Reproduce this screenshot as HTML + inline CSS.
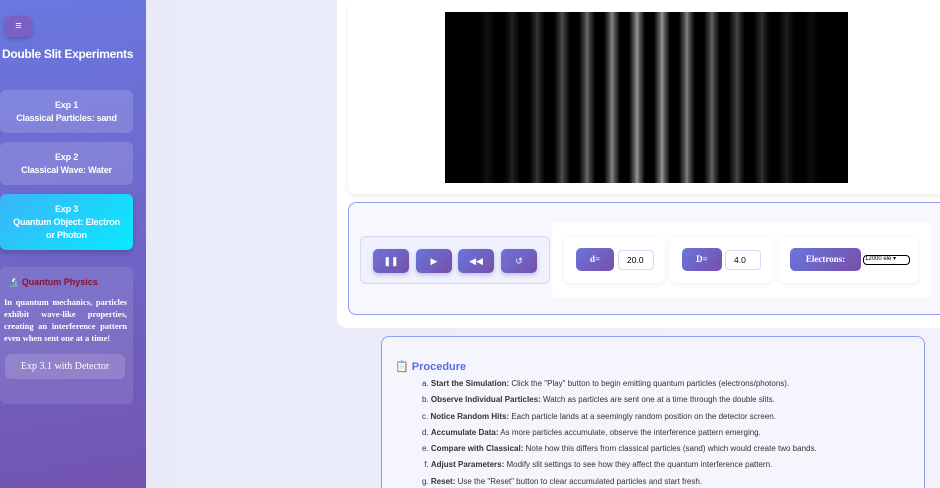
<!DOCTYPE html>
<html><head><meta charset="utf-8"><style>
*{box-sizing:border-box;margin:0;padding:0}
html,body{width:940px;height:488px;overflow:hidden}
body{background:linear-gradient(90deg,#e6e9f8,#f1f2fb);font-family:"Liberation Sans",sans-serif;position:relative}
.side{position:absolute;left:0;top:0;width:146px;height:488px;background:linear-gradient(170deg,#6a78e0,#7354b0 100%);color:#fff}
.menu{position:absolute;left:5px;top:16px;width:27px;height:21px;border-radius:6px;background:#7b5fc4;text-align:center;font-size:11px;line-height:21px;box-shadow:0 2px 4px rgba(0,0,0,.2)}
.title{position:absolute;left:2px;top:47px;font-size:12px;font-weight:bold;white-space:nowrap;letter-spacing:-.3px}
.nb{position:absolute;left:0;width:133px;border-radius:6px;background:rgba(255,255,255,.15);text-align:center;font-size:9px;font-weight:bold;line-height:13px;letter-spacing:-.2px}
.info{position:absolute;left:0;top:267px;width:133px;height:137px;border-radius:6px;background:rgba(255,255,255,.1);padding:10px 6px 0 4px;font-family:"Liberation Serif",serif}
.info h4{color:#8b1030;font-family:"Liberation Sans",sans-serif;font-size:9px;margin-left:4px}
.info p{font-size:8.5px;line-height:12px;text-align:justify;margin-top:8px;font-weight:bold}
.det{margin-top:10px;margin-left:1px;width:120px;height:25px;border-radius:6px;background:rgba(255,255,255,.15);text-align:center;line-height:25px;font-size:10px}
.wrap{position:absolute;left:337px;top:-10px;width:620px;height:338px;background:#fff;border-radius:10px}
.top{position:absolute;left:348px;top:0;width:600px;height:194px;background:#fff;border-radius:8px;box-shadow:0 2px 6px rgba(0,0,0,.08)}
.canvas{position:absolute;left:445px;top:12px;width:403px;height:171px;background:#000;overflow:hidden}
.ctrl{position:absolute;left:348px;top:202px;width:600px;height:113px;border:1.5px solid #8e9ef0;border-radius:8px;background:#f7f7fd}
.btns{position:absolute;left:360px;top:236px;width:190px;height:48px;border:1px solid #d3d9f7;border-radius:6px;background:#eff1fc}
.b{position:absolute;top:249px;width:36px;height:24px;border-radius:5px;background:linear-gradient(135deg,#6b74dc,#7650a8);color:#fff;font-size:9px;text-align:center;line-height:24px;box-shadow:0 2px 4px rgba(100,100,200,.35)}
.pan{position:absolute;left:552px;top:222px;width:379px;height:76px;background:#fff;border-radius:6px}
.g{position:absolute;top:237px;height:46px;background:#fff;border-radius:6px;box-shadow:0 1px 5px rgba(0,0,0,.08)}
.lb{position:absolute;top:248px;height:23px;border-radius:5px;background:linear-gradient(135deg,#6b74dc,#7650a8);color:#fff;font-family:"Liberation Serif",serif;font-weight:bold;font-size:9px;text-align:center;line-height:23px}
.in{position:absolute;top:250px;width:36px;height:20px;border:1px solid #d5dbf5;border-radius:4px;font-size:8.5px;padding-left:8px;line-height:18px;background:#fff}
.sel{position:absolute;left:863px;top:255px;width:47px;height:10px;border:1.5px solid #000;border-radius:4px;font-size:6px;line-height:7px;padding-left:1px}
.proc{position:absolute;left:381px;top:336px;width:544px;height:170px;border:1px solid #8e9ef0;border-radius:8px;background:#f5f6fd}
.proc h3{position:absolute;left:13px;top:23px;color:#5b6be0;font-size:11px}
.proc ul{position:absolute;left:40px;top:42px;list-style:none;font-size:8px;color:#333;font-family:"Liberation Sans",sans-serif}
.proc li{height:16.3px;white-space:nowrap}
</style></head><body>
<div class="side">
<div class="menu">≡</div>
<div class="title">Double Slit Experiments</div>
<div class="nb" style="top:90px;height:43px;padding-top:9px">Exp 1<br>Classical Particles: sand</div>
<div class="nb" style="top:142px;height:43px;padding-top:9px">Exp 2<br>Classical Wave: Water</div>
<div class="nb" style="top:194px;height:56px;padding-top:9px;background:linear-gradient(135deg,#3bb4f7,#08eaff);box-shadow:0 3px 6px rgba(0,0,0,.2)">Exp 3<br>Quantum Object: Electron<br>or Photon</div>
<div class="info"><h4>🔬 Quantum Physics</h4><p>In quantum mechanics, particles exhibit wave-like properties, creating an interference pattern even when sent one at a time!</p><div class="det">Exp 3.1 with Detector</div></div>
</div>
<div class="wrap"></div>
<div class="top"></div>
<div class="canvas">
<div style="position:absolute;inset:0;background:repeating-linear-gradient(90deg,#000 0px,#000 6px,#666 12px,#999 14px,#666 16px,#000 22px,#000 25px);background-position:3px 0;-webkit-mask:linear-gradient(90deg,transparent 5%,rgba(0,0,0,.4) 25%,#000 45%,#000 55%,rgba(0,0,0,.4) 75%,transparent 95%);mask:linear-gradient(90deg,transparent 5%,rgba(0,0,0,.4) 25%,#000 45%,#000 55%,rgba(0,0,0,.4) 75%,transparent 95%)"></div>
</div>
<div class="ctrl"></div>
<div class="btns"></div>
<div class="b" style="left:373px">❚❚</div>
<div class="b" style="left:416px">▶</div>
<div class="b" style="left:458px">◀◀</div>
<div class="b" style="left:501px">↺</div>
<div class="pan"></div>
<div class="g" style="left:564px;width:101px"></div>
<div class="g" style="left:670px;width:103px"></div>
<div class="g" style="left:779px;width:139px"></div>
<div class="lb" style="left:576px;width:38px">d=</div>
<div class="in" style="left:618px">20.0</div>
<div class="lb" style="left:682px;width:40px">D=</div>
<div class="in" style="left:725px">4.0</div>
<div class="lb" style="left:790px;width:71px">Electrons:</div>
<div class="sel">12000 ele ▾</div>
<div class="proc"><h3>📋 Procedure</h3>
<ul>
<li>a. <b>Start the Simulation:</b> Click the "Play" button to begin emitting quantum particles (electrons/photons).</li>
<li>b. <b>Observe Individual Particles:</b> Watch as particles are sent one at a time through the double slits.</li>
<li>c. <b>Notice Random Hits:</b> Each particle lands at a seemingly random position on the detector screen.</li>
<li>d. <b>Accumulate Data:</b> As more particles accumulate, observe the interference pattern emerging.</li>
<li>e. <b>Compare with Classical:</b> Note how this differs from classical particles (sand) which would create two bands.</li>
<li>&nbsp;f. <b>Adjust Parameters:</b> Modify slit settings to see how they affect the quantum interference pattern.</li>
<li>g. <b>Reset:</b> Use the "Reset" button to clear accumulated particles and start fresh.</li>
</ul></div>
</body></html>
